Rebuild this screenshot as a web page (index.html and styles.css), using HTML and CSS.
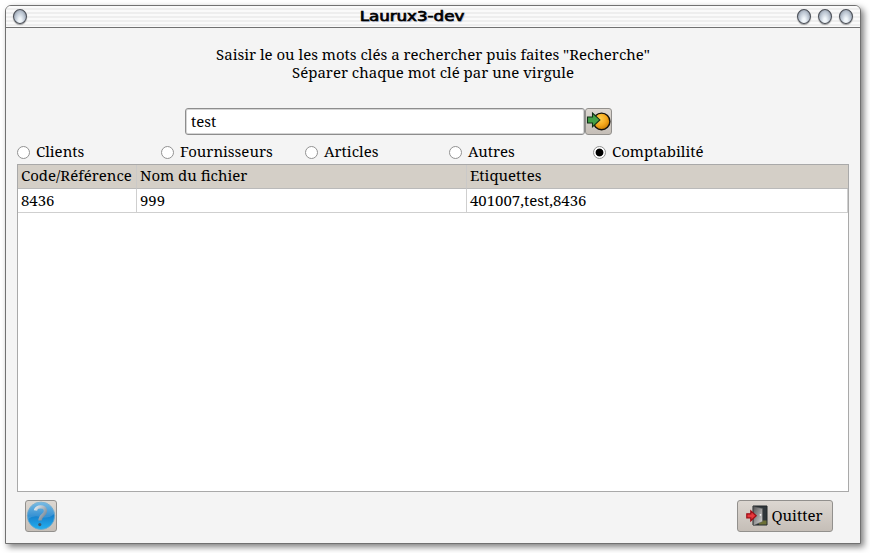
FILE: index.html
```html
<!DOCTYPE html>
<html lang="fr">
<head>
<meta charset="utf-8">
<title>Laurux3-dev</title>
<link rel="stylesheet" href="styles.css">
</head>
<body>
<main class="window">
  <header class="titlebar">
    <span class="orb"></span>
    <h1 class="title"><span>Laurux3-dev</span></h1>
    <div class="controls"><span class="orb"></span><span class="orb"></span><span class="orb"></span></div>
  </header>
  <section class="content">
    <p class="intro">Saisir le ou les mots clés a rechercher puis faites "Recherche"<br>Séparer chaque mot clé par une virgule</p>
    <form class="search">
      <div class="field">test</div>
      <button class="btn go" type="button" aria-label="Recherche">
        <svg width="25" height="25" viewBox="0 0 25 25">
          <defs><radialGradient id="gold" cx=".4" cy=".35" r=".7"><stop offset="0" stop-color="#ffd050"/><stop offset=".55" stop-color="#f5a81c"/><stop offset="1" stop-color="#c77900"/></radialGradient></defs>
          <circle cx="15.6" cy="12.4" r="8.300" fill="url(#gold)" stroke="#15120c" stroke-width="1.4"/>
          <path d="M1.500 8h5V4l7.400 6.900-7.400 6.900v-3.800h-5z" fill="#43a047" stroke="#123018" stroke-width="1.1"/>
        </svg>
      </button>
    </form>
    <div class="radios">
      <span class="radio"><i class="dot"></i><span>Clients</span></span>
      <span class="radio"><i class="dot"></i><span>Fournisseurs</span></span>
      <span class="radio"><i class="dot"></i><span>Articles</span></span>
      <span class="radio"><i class="dot"></i><span>Autres</span></span>
      <span class="radio"><i class="dot on"></i><span>Comptabilité</span></span>
    </div>
    <div class="grid">
      <div class="row head"><span>Code/Référence</span><span>Nom du fichier</span><span>Etiquettes</span></div>
      <div class="row"><span>8436</span><span>999</span><span>401007,test,8436</span></div>
    </div>
    <footer class="footer">
      <button class="btn help" type="button" aria-label="Aide">
        <svg width="30" height="30" viewBox="0 0 30 30">
          <defs>
            <linearGradient id="blue" x1="0" y1="0" x2="0" y2="1"><stop offset="0" stop-color="#62b0e0"/><stop offset=".5" stop-color="#1680cc"/><stop offset="1" stop-color="#25b0f0"/></linearGradient>
            <linearGradient id="steel" x1="0" y1="0" x2="1" y2="1"><stop offset="0" stop-color="#e2e7eb"/><stop offset="1" stop-color="#66798a"/></linearGradient>
          </defs>
          <circle cx="15" cy="14.8" r="13.7" fill="url(#blue)" stroke="#6fa9cc" stroke-width=".8"/>
          <path d="M2 15A13 13 0 0 1 28 13Q23 18 15 16T2 18Z" fill="#fff" opacity=".15"/>
          <path d="M9.500 9.500C10 4.800 19.500 4.500 19.500 10C19.500 14 14 14 14 19.500" fill="none" stroke="url(#steel)" stroke-width="3.300"/>
          <circle cx="13.800" cy="23.600" r="1.600" fill="#40566a"/>
        </svg>
      </button>
      <button class="btn quit" type="button">
        <svg width="22" height="22" viewBox="0 0 22 22">
          <defs><linearGradient id="door" x1="0" y1="0" x2="1" y2="1"><stop offset="0" stop-color="#555"/><stop offset=".5" stop-color="#999"/><stop offset="1" stop-color="#ddd"/></linearGradient></defs>
          <path d="M7 1h14v19H7z" fill="#30373b" stroke="#202628"/>
          <path d="M13 15.500h7.500v4H13z" fill="#6c7036"/>
          <path d="M7.500 1.500l9 2v13l-9 4z" fill="url(#door)" stroke="#555" stroke-width=".5"/>
          <circle cx="14.500" cy="9.800" r=".9" fill="#fff"/>
          <path d="M.8 8.800h4V5.800l5.400 5-5.400 5v-3H.8z" fill="#e8383c" stroke="#9d0d16" stroke-width="1.200"/>
        </svg>
        <span>Quitter</span>
      </button>
    </footer>
  </section>
</main>
</body>
</html>
```
FILE: styles.css
```css
* { box-sizing: border-box; }
html, body { margin: 0; height: 100%; overflow: hidden; }
body {
  padding: 5px 9px 9px 5px;
  background: #fff;
  color: #000;
  font: 14.97px/18px "Noto Serif", "Droid Serif", "DejaVu Serif Condensed", "DejaVu Serif", serif;
}
.window {
  width: 856px;
  height: 539px;
  border: 1px solid #717171;
  border-radius: 6px 6px 0 0;
  background: #f4f4f4;
  box-shadow: 3px 3px 6px rgba(0, 0, 0, .5);
}
.titlebar {
  display: flex;
  align-items: center;
  height: 22px;
  padding: 0 7px;
  border-bottom: 1px solid #717171;
  border-radius: 5px 5px 0 0;
  background: repeating-linear-gradient(#fafafa 0 2px, #eeeeee 2px 4px);
}
.title {
  flex: 1;
  margin: 0;
  padding-bottom: 2px;
  text-align: center;
  font: 14px/20px "DejaVu Sans", sans-serif;
  -webkit-text-stroke: .7px #000;
  text-shadow: 1px 1px 1px #a9b6d2;
}
.title span { display: inline-block; transform: scaleX(1.19); }
.controls { display: flex; gap: 7px; }
.orb {
  width: 14px;
  height: 15px;
  border: 1px solid #4a4e56;
  border-radius: 50%;
  background: radial-gradient(ellipse at 50% 80%, #f1f6fa 0 15%, #bec8d4 55%, #777f8d 100%);
  box-shadow: 0 1px 1px #999;
}
.content { padding: 17px 11px 0; }
.intro { margin: 0; height: 63px; text-align: center; }
.search { display: flex; height: 27px; margin-left: 168px; }
.field {
  width: 400px;
  padding: 3px 5px;
  border: 1px solid #8d8d8d;
  border-radius: 3px;
  background: #fff;
  box-shadow: inset 0 0 0 1px #d5d5d5;
}
.btn {
  display: flex;
  align-items: center;
  justify-content: center;
  padding: 0;
  border: 1px solid #92908d;
  border-radius: 3px;
  background: linear-gradient(#dcd7d1, #c5beb7);
  color: #000;
  font: inherit;
}
.go { width: 27px; }
.radios { display: grid; grid-template-columns: repeat(5, 144px); height: 29px; padding-top: 8px; }
.radio { display: flex; align-items: center; gap: 6px; height: 18px; }
.radio span { padding-bottom: 2px; }
.dot { width: 13px; height: 13px; border: 1px solid #929292; border-radius: 50%; background: #fff; }
.on { background: radial-gradient(circle, #000 0 3.5px, #fff 4.3px); }
.grid { width: 832px; height: 328px; border: 1px solid #a9a9a9; background: #fff; }
.row {
  display: grid;
  grid-template-columns: 119px 330px 381px;
  height: 24px;
  line-height: 23px;
  white-space: nowrap;
}
.row span { padding-left: 3px; border-right: 1px solid #cfcfcf; border-bottom: 1px solid #cfcfcf; }
.head { background: #d4cfc7; line-height: 21px; }
.head span { border-right-color: #cac9c8; border-bottom-color: #bababa; }
.head span:last-child { border-right: 0; }
.footer { display: flex; justify-content: space-between; padding: 8px 16px 0 8px; }
.help { width: 32px; height: 32px; }
.quit { width: 96px; height: 32px; gap: 4px; padding-right: 2px; }
.quit span { padding-bottom: 2px; }
```
